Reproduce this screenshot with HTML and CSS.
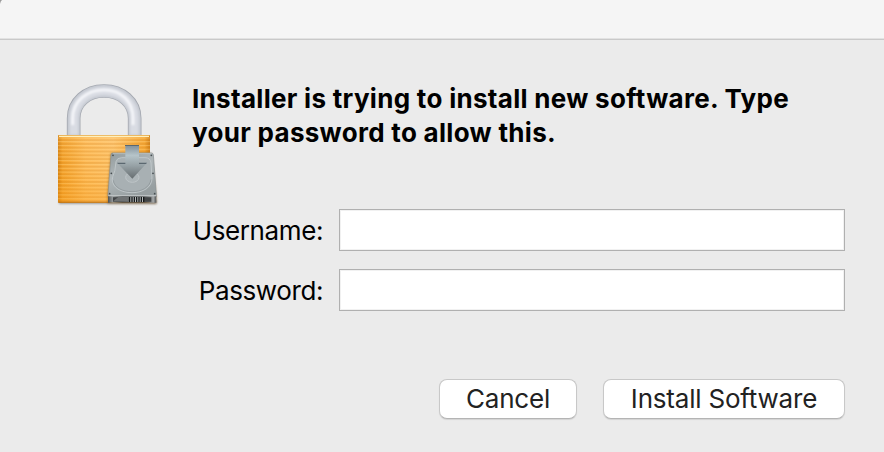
FILE: index.html
```html
<!DOCTYPE html>
<html lang="en">

<head>
  <meta charset="UTF-8">
  <meta name="viewport" content="width=device-width, initial-scale=1.0">
  <title>Installer</title>
  <link rel="stylesheet" href="styles.css">
</head>

<body>
<div class="dialog">
  <div class="titlebar">
    <svg class="corner" viewBox="0 0 3 4" width="3" height="4">
      <path fill="#999" d="M0 0h2Q.5 1 0 4z"></path>
    </svg>
  </div>

  <div class="content">

    <!-- Padlock with the installer drive -->
    <svg class="lock" viewBox="0 0 375 420" width="125" height="140">
      <defs>
        <linearGradient id="brass" x1="0" x2="1" y1="0" y2="0">
          <stop offset="0" stop-color="#d88413"></stop>
          <stop offset=".05" stop-color="#f5a42e"></stop>
          <stop offset=".3" stop-color="#ffbd5b"></stop>
          <stop offset=".6" stop-color="#ffc56e"></stop>
          <stop offset=".94" stop-color="#f6a52f"></stop>
          <stop offset="1" stop-color="#cf7b10"></stop>
        </linearGradient>
        <linearGradient id="shade" x1="0" x2="0" y1="0" y2="1">
          <stop offset="0" stop-color="#fff" stop-opacity=".08"></stop>
          <stop offset=".5" stop-color="#f90" stop-opacity="0"></stop>
          <stop offset="1" stop-color="#f59a1a" stop-opacity=".3"></stop>
        </linearGradient>
        <pattern id="ridges" width="10" height="11.4" patternUnits="userSpaceOnUse" y="187">
          <rect width="10" height="3" y="7" fill="#c97505" opacity=".38"></rect>
          <rect width="10" height="3" y="0" fill="#ffd27f" opacity=".4"></rect>
        </pattern>
        <linearGradient id="plate" x1="0" x2=".5" y1="0" y2="1">
          <stop offset="0" stop-color="#929b9d"></stop>
          <stop offset=".5" stop-color="#b0b7b9"></stop>
          <stop offset="1" stop-color="#979fa1"></stop>
        </linearGradient>
        <linearGradient id="arrow" x1="0" x2="0" y1="0" y2="1">
          <stop offset="0" stop-color="#82909a"></stop>
          <stop offset=".3" stop-color="#b6c4c9"></stop>
          <stop offset=".6" stop-color="#98a3a7"></stop>
          <stop offset="1" stop-color="#666d70"></stop>
        </linearGradient>
        <linearGradient id="front" x1="0" x2="1" y1="0" y2="0">
          <stop offset="0" stop-color="#4e5152"></stop>
          <stop offset=".1" stop-color="#969a9b"></stop>
          <stop offset=".3" stop-color="#4a4d4e"></stop>
          <stop offset=".75" stop-color="#555859"></stop>
          <stop offset=".94" stop-color="#a2a5a6"></stop>
          <stop offset="1" stop-color="#4e5152"></stop>
        </linearGradient>
        <filter id="soft" x="-10%" y="-100%" width="120%" height="300%">
          <feGaussianBlur stdDeviation="3"></feGaussianBlur>
        </filter>
        <filter id="sheen" x="-10%" y="-10%" width="120%" height="120%">
          <feGaussianBlur stdDeviation="2.5"></feGaussianBlur>
        </filter>
      </defs>

      <rect x="42" y="376" width="292" height="10" fill="#000" opacity=".4" filter="url(#soft)"></rect>

      <!-- shackle -->
      <g fill="none">
        <path stroke="#a4a8b0" stroke-width="41" d="M86 183V130C86 82 125 48 177 48S269 82 269 130V183"></path>
        <path stroke="#c4c8d0" stroke-width="36" d="M86 183V130C86 82 125 48 177 48S269 82 269 130V183"></path>
        <g filter="url(#sheen)">
          <path stroke="#d9dce3" stroke-width="26" d="M87 180V130C87 83 126 48 177 48S268 83 268 130V180"></path>
          <path stroke="#f7f8fb" stroke-width="8" d="M83 150V130C83 79 125 45 177 45S264 79 264 130V150"></path>
        </g>
      </g>

      <!-- body -->
      <rect x="39" y="180" width="276" height="203" rx="3" fill="url(#brass)"></rect>
      <rect x="39" y="187" width="276" height="192" fill="url(#ridges)"></rect>
      <rect x="39" y="180" width="276" height="203" rx="3" fill="url(#shade)"></rect>
      <rect x="40" y="180" width="274" height="2" fill="#d99427"></rect>
      <rect x="42" y="182" width="270" height="4" fill="#fff0bd"></rect>
      <rect x="40" y="380" width="274" height="3" fill="#b96b0a"></rect>

      <!-- drive -->
      <path fill="#704000" opacity=".4" filter="url(#soft)" d="M197 234H320L335 365V386H187V362z"></path>
      <path fill="url(#plate)" stroke="#868e91" stroke-width="2" d="M203 234H319Q324 234 325 239L334 357V364H189V357L198 239Q198 234 203 234z"></path>
      <path fill="none" stroke="#c6cdcf" stroke-width="2" d="M204 236H320"></path>
      <path fill="#a8b0b3" stroke="#c3cacd" stroke-width="2.5" d="M213 260Q216 248 230 248H300Q316 248 318 264L321 309C321 337 295 353 261 353S202 337 202 314C202 300 211 292 211 276z"></path>
      <path fill="none" stroke="#8b9396" stroke-width="2" d="M205 316C208 338 233 350 261 350S314 338 318 313"></path>
      <ellipse cx="262" cy="307" rx="20" ry="15" fill="#adb5b8" stroke="#bec5c8" stroke-width="3"></ellipse>
      <g fill="#454d50">
        <circle cx="204" cy="241" r="2.6"></circle>
        <circle cx="319" cy="241" r="2.6"></circle>
        <circle cx="199" cy="295" r="2.6"></circle>
        <circle cx="324" cy="295" r="2.6"></circle>
        <circle cx="194" cy="356" r="2.6"></circle>
        <circle cx="329" cy="356" r="2.6"></circle>
      </g>
      <path fill="url(#front)" d="M189 363H334V383H189z"></path>
      <path fill="#c8cdce" d="M190 361H333V364H190z"></path>
      <path fill="#424546" d="M204 367H319V380H204z"></path>
      <path fill="#707374" d="M204 379L220 366H249V380z"></path>
      <rect x="251" y="366" width="46" height="15" fill="#b5b9ba"></rect>
      <path stroke="#151819" stroke-width="4" d="M254 366V381M261 366V381M268 366V381M275 366V381M282 366V381M289 366V381M296 366V381"></path>
      <path fill="url(#arrow)" d="M241 211H282V263H306L262 311L216 263H241z"></path>
      <path fill="#5b6870" d="M240 210H282V213H240zM216 263H241V267H219zM282 263H306L303 267H282z"></path>
    </svg>

    <div class="main">
      <h1 class="message">Installer is trying to install new software. Type<br>your password to allow this.</h1>

      <form class="login">
        <div class="row">
          <label class="label" for="username">Username:</label>
          <input class="field" id="username" type="text">
        </div>
        <div class="row">
          <label class="label" for="password">Password:</label>
          <input class="field" id="password" type="password">
        </div>

        <div class="actions">
          <button class="button cancel" type="button">Cancel</button>
          <button class="button install" type="submit">Install Software</button>
        </div>
      </form>
    </div>

  </div>
</div>
</body>

</html>
```

FILE: styles.css
```css
*,
*::before,
*::after {
  box-sizing: border-box;
}

body {
  margin: 0;
  background: #ebebeb;
  color: #000;
  font-family: Inter, "Liberation Sans", sans-serif;
  font-size: 26px;
}

.dialog {
  height: 452px;
  overflow: hidden;
}

.titlebar {
  height: 40px;
  background: #f5f5f5;
  border-bottom: 1px solid #c9c9c9;
  box-shadow: inset 0 -1px 0 #e2e2e2;
}

.corner {
  display: block;
}

.content {
  display: flex;
  align-items: flex-start;
  gap: 22px;
  padding: 35px 39px 0 45px;
}

.lock {
  flex: none;
}

.main {
  flex: 1;
  padding-top: 7px;
}

.message {
  margin: 0;
  font-size: 26px;
  font-weight: 700;
  line-height: 34px;
  letter-spacing: 0.3px;
  white-space: nowrap;
}

.login {
  display: flex;
  flex-direction: column;
  gap: 18px;
  margin-top: 59px;
}

.row {
  display: flex;
  align-items: center;
  gap: 16px;
}

.label {
  width: 131px;
  text-align: right;
  letter-spacing: -0.4px;
}

.field {
  flex: 1;
  height: 42px;
  padding: 0 8px;
  background: #fff;
  border: 1px solid #b0b0b0;
  box-shadow: inset 0 0 0 1px #f1f1f1;
  font: inherit;
  outline: none;
}

.actions {
  display: flex;
  justify-content: flex-end;
  gap: 26px;
  margin-top: 50px;
}

.button {
  height: 40px;
  padding: 0 0 2px;
  background: #fff;
  border: 1px solid #c8c8c8;
  border-bottom-color: #b4b4b4;
  border-radius: 8px;
  box-shadow: 0 1px 1px rgba(0, 0, 0, 0.1);
  color: #222;
  font: inherit;
  letter-spacing: -0.2px;
}

.cancel {
  width: 138px;
}

.install {
  width: 242px;
}
```
